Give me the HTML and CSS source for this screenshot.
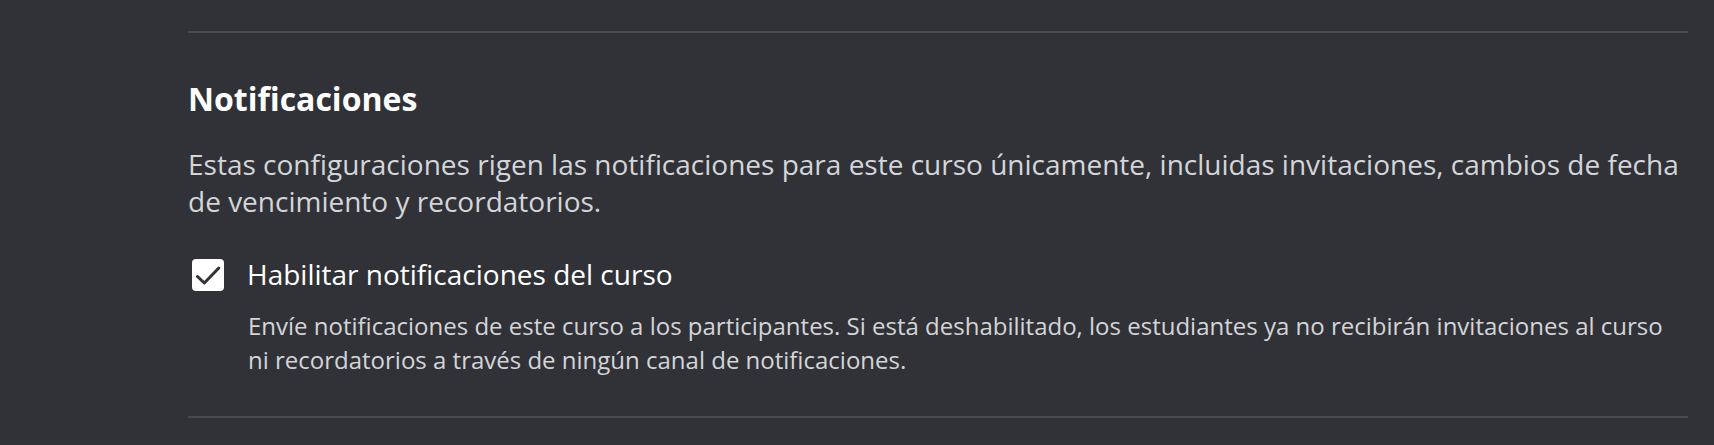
FILE: index.html
```html
<!DOCTYPE html>
<html lang="es">
<head>
<meta charset="utf-8">
<title>Notificaciones</title>
<link rel="stylesheet" href="styles.css">
</head>
<body>
<main class="page">
  <section class="section">
    <h2 class="title">Notificaciones</h2>
    <p class="intro">Estas configuraciones rigen las notificaciones para este curso únicamente, incluidas invitaciones, cambios de fecha de vencimiento y recordatorios.</p>
    <div class="option">
      <label class="option-row">
        <span class="checkbox" aria-checked="true" role="checkbox">
          <svg viewBox="0 0 32 32" width="32" height="32" aria-hidden="true"><path d="M5.5 17.5 L12.3 24 L26.8 9" fill="none" stroke="#323338" stroke-width="3" stroke-linecap="round" stroke-linejoin="round"/></svg>
        </span>
        <span class="option-label">Habilitar notificaciones del curso</span>
      </label>
      <p class="option-desc">Envíe notificaciones de este curso a los participantes. Si está deshabilitado, los estudiantes ya no recibirán invitaciones al curso ni recordatorios a través de ningún canal de notificaciones.</p>
    </div>
  </section>
</main>
</body>
</html>
```
FILE: styles.css
```css
html, body {
  margin: 0;
  padding: 0;
  background: #313237;
}
body {
  font-family: "Open Sans", "Noto Sans", sans-serif;
  color: #d4d5d8;
  height: 445px;
  overflow: hidden;
}
.page {
  padding-top: 31px;
  padding-left: 188px;
  width: 1500px;
}
.section {
  border-top: 2px solid #4a4b50;
  border-bottom: 2px solid #4a4b50;
  padding-top: 42px;
  padding-bottom: 40px;
}
.title {
  margin: 0;
  font-size: 32px;
  line-height: 48px;
  font-weight: 700;
  color: #ffffff;
}
.intro {
  margin: 23px 0 0;
  font-size: 28px;
  line-height: 37px;
  color: #d4d5d8;
}
.option {
  margin-top: 36px;
}
.option-row {
  display: flex;
  align-items: center;
  gap: 23px;
  padding-left: 4px;
}
.checkbox {
  width: 32px;
  height: 32px;
  background: #ffffff;
  border-radius: 4px;
  display: flex;
  flex: none;
}
.option-label {
  font-size: 28px;
  line-height: 37px;
  color: #ffffff;
}
.option-desc {
  margin: 16px 0 0 60px;
  font-size: 24px;
  line-height: 33.5px;
  color: #d4d5d8;
}
```
